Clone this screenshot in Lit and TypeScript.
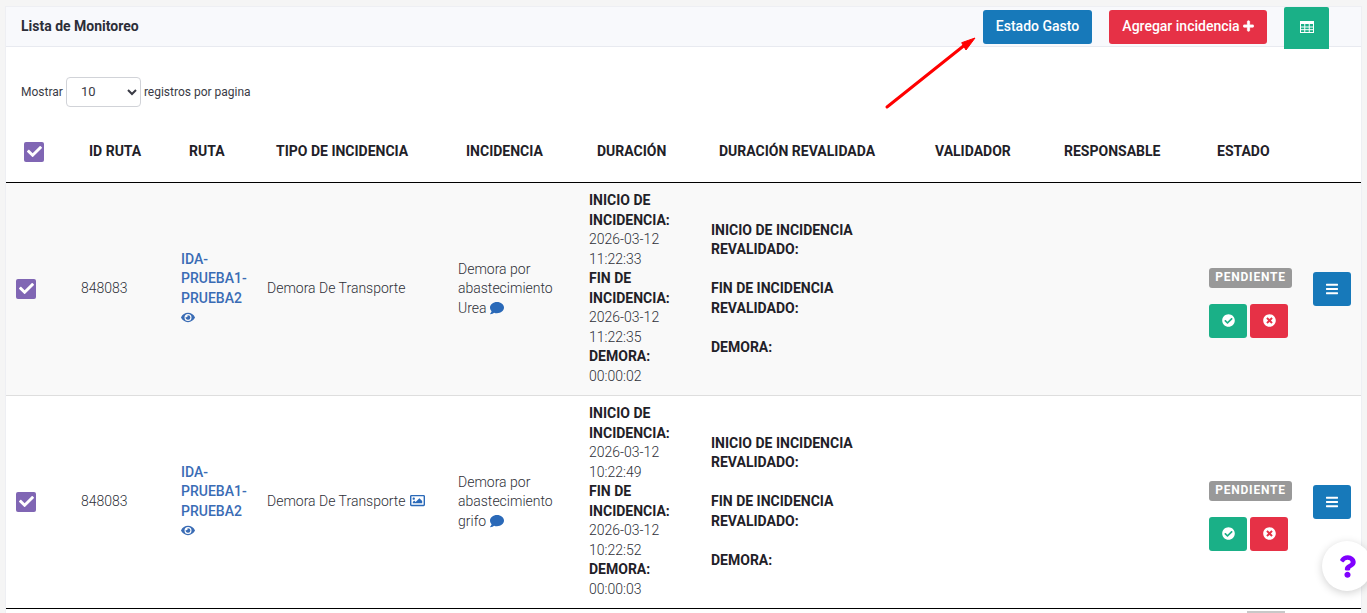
import { LitElement, html, css, svg } from "lit";
import { customElement } from "lit/decorators.js";

const P = {
  eye: ["0 0 576 512", "M572.52 241.4C518.29 135.59 410.93 64 288 64S57.68 135.64 3.48 241.41a32.35 32.35 0 0 0 0 29.19C57.71 376.41 165.07 448 288 448s230.32-71.64 284.52-177.41a32.35 32.35 0 0 0 0-29.19zM288 400a144 144 0 1 1 144-144 143.93 143.93 0 0 1-144 144zm0-240a95.31 95.31 0 0 0-25.31 3.79 47.85 47.85 0 0 1-66.9 66.9A95.78 95.78 0 1 0 288 160z"],
  comment: ["0 0 512 512", "M256 32C114.6 32 0 125.1 0 240c0 49.6 21.4 95 57 130.7C44.5 421.1 2.7 466 2.2 466.5c-2.2 2.3-2.8 5.7-1.5 8.7S4.8 480 8 480c66.3 0 116-31.8 140.6-51.4 32.7 12.3 69 19.4 107.4 19.4 141.4 0 256-93.1 256-208S397.4 32 256 32z"],
  ok: ["0 0 512 512", "M504 256c0 136.967-111.033 248-248 248S8 392.967 8 256 119.033 8 256 8s248 111.033 248 248zM227.314 387.314l184-184c6.248-6.248 6.248-16.379 0-22.627l-22.627-22.627c-6.248-6.249-16.379-6.249-22.628 0L216 308.118l-70.059-70.059c-6.248-6.248-16.379-6.248-22.628 0l-22.627 22.627c-6.248 6.248-6.248 16.379 0 22.627l104 104c6.249 6.249 16.379 6.249 22.628.001z"],
  no: ["0 0 512 512", "M256 8C119 8 8 119 8 256s111 248 248 248 248-111 248-248S393 8 256 8zm121.6 313.1c4.7 4.7 4.7 12.3 0 17L338 377.6c-4.7 4.7-12.3 4.7-17 0L256 312l-65.1 65.6c-4.7 4.7-12.3 4.7-17 0L134.4 338c-4.7-4.7-4.7-12.3 0-17l65.6-65-65.6-65.1c-4.7-4.7-4.7-12.3 0-17l39.6-39.6c4.7-4.7 12.3-4.7 17 0l65 65.7 65.1-65.6c4.7-4.7 12.3-4.7 17 0l39.6 39.6c4.7 4.7 4.7 12.3 0 17L312 256l65.6 65.1z"],
  bars: ["0 0 448 512", "M16 132h416c8.837 0 16-7.163 16-16V76c0-8.837-7.163-16-16-16H16C7.163 60 0 67.163 0 76v40c0 8.837 7.163 16 16 16zm0 160h416c8.837 0 16-7.163 16-16v-40c0-8.837-7.163-16-16-16H16c-8.837 0-16 7.163-16 16v40c0 8.837 7.163 16 16 16zm0 160h416c8.837 0 16-7.163 16-16v-40c0-8.837-7.163-16-16-16H16c-8.837 0-16 7.163-16 16v40c0 8.837 7.163 16 16 16z"],
  plus: ["0 0 448 512", "M416 208H272V64c0-17.67-14.33-32-32-32h-32c-17.67 0-32 14.33-32 32v144H32c-17.67 0-32 14.33-32 32v32c0 17.67 14.33 32 32 32h144v144c0 17.67 14.33 32 32 32h32c17.67 0 32-14.33 32-32V304h144c17.67 0 32-14.33 32-32v-32c0-17.67-14.33-32-32-32z"],
  check: ["0 0 512 512", "M173.898 439.404l-166.4-166.4c-9.997-9.997-9.997-26.206 0-36.204l36.203-36.204c9.997-9.998 26.207-9.998 36.204 0L192 312.69 432.095 72.596c9.997-9.997 26.207-9.997 36.204 0l36.203 36.204c9.997 9.997 9.997 26.206 0 36.204l-294.4 294.401c-9.998 9.997-26.207 9.997-36.204-.001z"],
  image: ["0 0 512 512", "M464 64H48C21.49 64 0 85.49 0 112v288c0 26.51 21.49 48 48 48h416c26.51 0 48-21.49 48-48V112c0-26.51-21.49-48-48-48zm-6 336H54a6 6 0 0 1-6-6V118a6 6 0 0 1 6-6h404a6 6 0 0 1 6 6v276a6 6 0 0 1-6 6zM128 152c-22.091 0-40 17.909-40 40s17.909 40 40 40 40-17.909 40-40-17.909-40-40-40zM96 352h320v-80l-87.515-87.515c-4.686-4.686-12.284-4.686-16.971 0L192 304l-39.515-39.515c-4.686-4.686-12.284-4.686-16.971 0L96 304v48z"],
  help: ["0 0 384 512", "M202.021 0C122.202 0 70.503 32.703 29.914 91.026c-7.363 10.58-5.093 25.086 5.178 32.874l43.138 32.709c10.373 7.865 25.132 6.026 33.253-4.148 25.049-31.381 43.63-49.449 82.757-49.449 30.764 0 68.816 19.799 68.816 49.631 0 22.552-18.617 34.134-48.993 51.164-35.423 19.86-82.299 44.576-82.299 106.405V320c0 13.255 10.745 24 24 24h72.471c13.255 0 24-10.745 24-24v-5.773c0-42.86 125.268-44.645 125.268-160.627C377.504 66.256 286.902 0 202.021 0zM192 373.459c-38.196 0-69.271 31.075-69.271 69.271 0 38.195 31.075 69.27 69.271 69.27s69.271-31.075 69.271-69.271-31.075-69.27-69.271-69.27z"],
};
const icon = (k: keyof typeof P, cls = "") =>
  html`<svg class="ic ${cls}" viewBox=${P[k][0]} fill="currentColor"><path d=${P[k][1]}></path></svg>`;

const tableIcon = svg`<rect x="0.5" y="0.5" width="13" height="11" fill="none" stroke="currentColor"/><rect x="0" y="0" width="14" height="3" fill="currentColor"/><path d="M4.75 3v8M9.25 3v8M1 6h12M1 8.7h12" stroke="currentColor" fill="none"/>`;

const rows = [
  { tipo: "Demora De Transporte", img: false, inc: ["Demora por", "abastecimiento", "Urea"], i: ["2026-03-12", "11:22:33"], f: ["2026-03-12", "11:22:35"], d: "00:00:02" },
  { tipo: "Demora De Transporte", img: true, inc: ["Demora por", "abastecimiento", "grifo"], i: ["2026-03-12", "10:22:49"], f: ["2026-03-12", "10:22:52"], d: "00:00:03" },
];
const heads = ["ID RUTA", "RUTA", "TIPO DE INCIDENCIA", "INCIDENCIA", "DURACIÓN", "DURACIÓN REVALIDADA", "VALIDADOR", "RESPONSABLE", "ESTADO"];
const widths = [65, 100, 87, 190, 131, 122, 216, 129, 153, 104, 58];

@customElement("app-root")
export class AppRoot extends LitElement {
  static styles = css`
    :host { display: block; height: 613px; overflow: hidden; box-sizing: border-box; padding: 7px 6px 0; background: #f5f5f5; position: relative;
      font-family: Roboto, "Liberation Sans", sans-serif; font-size: 14px; line-height: 19.5px; color: #3a3b45; }
    .card { background: #fff; height: 640px; box-shadow: 0 0 0 1px #eeeff3; }
    .head { display: flex; align-items: flex-start; height: 40px; background: #f8f9fc; box-sizing: border-box; border-bottom: 1px solid #e8eaf0; padding-left: 15px; }
    .title { font-weight: 700; font-size: 14px; color: #2c2e38; line-height: 38px; flex: 1; }
    .btn { border: 0; border-radius: 3px; color: #fff; font: 500 14px/20px Roboto, sans-serif; height: 34px; padding: 0; margin-top: 3px; display: flex; align-items: center; justify-content: center; }
    .blue { background: #1779ba; }
    .red { background: #e63146; }
    .green { background: #1ab087; }
    .b1 { width: 109px; margin-right: 17px; padding-bottom: 2px; }
    .b2 { width: 158px; margin-right: 17px; gap: 3px; padding-bottom: 2px; }
    .b2 .ic { width: 11px; height: 12px; stroke: currentColor; stroke-width: 30px; }
    .b3 { width: 45px; height: 41.5px; margin: 0 32px 0 0; border-radius: 2px 2px 0 0; padding-bottom: 2px; }
    .b3 svg { width: 14px; height: 12px; }
    .len { display: flex; align-items: center; gap: 3px; padding: 30px 0 12px 15px; font-size: 12px; font-weight: 400; color: #3a3b45; height: 30px; }
    .len span { padding-top: 2px; }
    select { width: 75px; height: 30px; border: 1px solid #d1d3d8; border-radius: 4px; background: #fff; color: #3a3b45; font: 400 13px Roboto, sans-serif; padding: 0 0 2px 10px; }
    table { border-collapse: separate; border-spacing: 0; table-layout: fixed; width: 1355px; }
    th { height: 61px; padding: 2px 0 0 18px; text-align: left; font-weight: 700; font-size: 14px; color: #1f2128; border-bottom: 1px solid #000; white-space: nowrap; vertical-align: middle; }
    td { padding: 8.25px 0 8.75px 10px; vertical-align: middle; font-weight: 300; color: #2e3038; border-bottom: 1px solid #dedede; }
    tbody tr:nth-child(1) td { background: #f9f9f9; }
    tbody tr:last-child td { border-bottom-color: #000; }
    b { font-weight: 700; color: #1f2128; display: block; }
    .ck { width: 20px; height: 20px; background: #8066b4; border-radius: 2px; display: flex; align-items: center; justify-content: center; color: #fff; }
    .ck .ic { width: 15px; height: 15px; }
    .ruta { font-weight: 500; color: #3a6cb5; }
    .ic { display: inline-block; vertical-align: -1px; }
    .eye { width: 14px; height: 13px; vertical-align: -2px; }
    .cm { width: 14px; height: 14px; color: #2a69b8; vertical-align: -2px; }
    .im { width: 15px; height: 15px; color: #2a69b8; vertical-align: -2px; margin-left: 1px; }
    .nw { white-space: nowrap; padding-left: 9px; }
    .badge { display: block; width: 83px; height: 20px; box-sizing: border-box; background: #999; border-radius: 3px; color: #fff; font-weight: 700; font-size: 12px; line-height: 18px; letter-spacing: 0.8px; text-align: center; }
    .estado { margin-top: 28px; }
    .acts { display: flex; gap: 3px; margin-top: 16px; }
    .sq { width: 38px; height: 34px; margin: 0; }
    .sq .ic { width: 13px; height: 13px; }
    .sq .bars { width: 12px; height: 14px; }
    .stub { width: 38px; height: 2px; background: #c8c8c8; margin: 2px 0 0 1241px; }
    .arrow { position: absolute; left: 880px; top: 30px; width: 100px; height: 84px; }
    .fab { position: absolute; left: 1322px; top: 541px; width: 50px; height: 50px; border-radius: 50%; background: #fff; box-shadow: 0 2px 8px rgba(0,0,0,.18); display: flex; align-items: center; justify-content: center; color: #8000ff; }
    .fab svg { width: 17px; height: 23px; }
  `;

  render() {
    return html`
      <div class="card">
        <div class="head">
          <div class="title">Lista de Monitoreo</div>
          <button class="btn blue b1">Estado Gasto</button>
          <button class="btn red b2">Agregar incidencia ${icon("plus")}</button>
          <button class="btn green b3"><svg viewBox="0 0 14 12">${tableIcon}</svg></button>
        </div>
        <div class="len"><span>Mostrar</span> <select><option>10</option></select> <span>registros por pagina</span></div>
        <table>
          <colgroup>${widths.map((w) => html`<col style="width:${w}px" />`)}</colgroup>
          <thead>
            <tr>
              <th><div class="ck">${icon("check")}</div></th>
              ${heads.map((h) => html`<th>${h}</th>`)}
              <th></th>
            </tr>
          </thead>
          <tbody>
            ${rows.map(
              (r) => html`<tr>
                <td><div class="ck">${icon("check")}</div></td>
                <td>848083</td>
                <td class="ruta">IDA-<br />PRUEBA1-<br />PRUEBA2<br />${icon("eye", "eye")}</td>
                <td class="nw">${r.tipo}${r.img ? html` ${icon("image", "im")}` : ""}</td>
                <td>${r.inc[0]}<br />${r.inc[1]}<br />${r.inc[2]} ${icon("comment", "cm")}</td>
                <td>
                  <b>INICIO DE<br />INCIDENCIA:</b>${r.i[0]}<br />${r.i[1]}
                  <b>FIN DE<br />INCIDENCIA:</b>${r.f[0]}<br />${r.f[1]}
                  <b>DEMORA:</b>${r.d}
                </td>
                <td>
                  <b>INICIO DE INCIDENCIA<br />REVALIDADO:</b><br />
                  <b>FIN DE INCIDENCIA<br />REVALIDADO:</b><br />
                  <b>DEMORA:</b>
                </td>
                <td></td>
                <td></td>
                <td>
                  <div class="estado">
                    <span class="badge">PENDIENTE</span>
                    <div class="acts">
                      <button class="btn green sq">${icon("ok")}</button>
                      <button class="btn red sq">${icon("no")}</button>
                    </div>
                  </div>
                </td>
                <td><button class="btn blue sq">${icon("bars", "bars")}</button></td>
              </tr>`
            )}
          </tbody>
        </table>
        <div class="stub"></div>
      </div>
      <svg class="arrow" viewBox="0 0 100 84">
        <path d="M7 77 L86 14" stroke="#f00" stroke-width="3" stroke-linecap="round" fill="none"></path>
        <path d="M95 8 L81.7 12.7 L86 20 Z" fill="#f00" stroke="#f00" stroke-width="1"></path>
      </svg>
      <div class="fab">${icon("help")}</div>
    `;
  }
}
